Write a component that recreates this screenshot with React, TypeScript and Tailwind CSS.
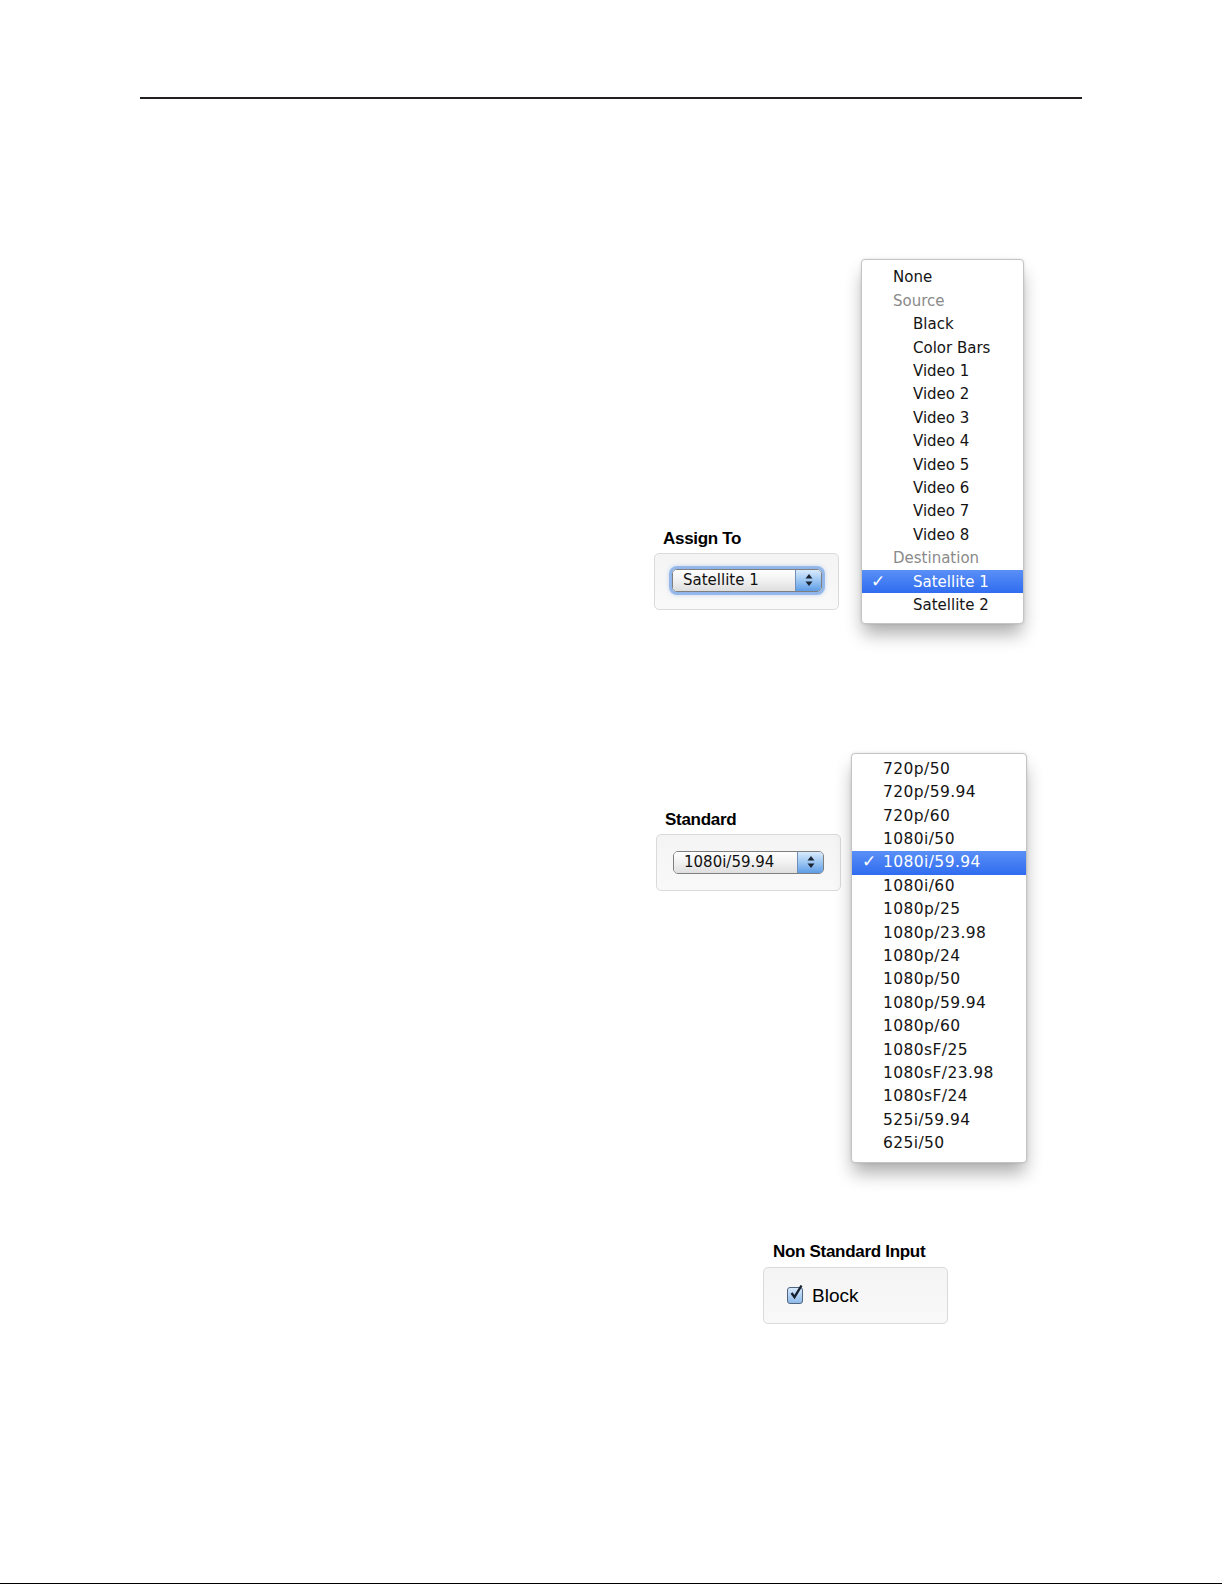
import clsx from "clsx";

type Item = { label: string; kind?: "header" | "sub"; checked?: boolean };

const ASSIGN_ITEMS: Item[] = [
  { label: "None" },
  { label: "Source", kind: "header" },
  { label: "Black", kind: "sub" },
  { label: "Color Bars", kind: "sub" },
  { label: "Video 1", kind: "sub" },
  { label: "Video 2", kind: "sub" },
  { label: "Video 3", kind: "sub" },
  { label: "Video 4", kind: "sub" },
  { label: "Video 5", kind: "sub" },
  { label: "Video 6", kind: "sub" },
  { label: "Video 7", kind: "sub" },
  { label: "Video 8", kind: "sub" },
  { label: "Destination", kind: "header" },
  { label: "Satellite 1", kind: "sub", checked: true },
  { label: "Satellite 2", kind: "sub" },
];

const STANDARDS = [
  "720p/50",
  "720p/59.94",
  "720p/60",
  "1080i/50",
  "1080i/59.94",
  "1080i/60",
  "1080p/25",
  "1080p/23.98",
  "1080p/24",
  "1080p/50",
  "1080p/59.94",
  "1080p/60",
  "1080sF/25",
  "1080sF/23.98",
  "1080sF/24",
  "525i/59.94",
  "625i/50",
];

const UI_FONT = "font-['DejaVu_Sans',sans-serif]";
const LABEL_FONT = "font-['Liberation_Sans',Arial,sans-serif]";

function Arrows() {
  return (
    <svg width="8" height="14" viewBox="0 0 8 14">
      <path d="M4 1 L7.5 5.5 L0.5 5.5 Z" fill="#1b2433" />
      <path d="M4 13 L7.5 8.5 L0.5 8.5 Z" fill="#1b2433" />
    </svg>
  );
}

function Select({ value, focused, width }: { value: string; focused?: boolean; width: string }) {
  return (
    <div
      className={clsx(
        "flex h-[23px] overflow-hidden rounded-[5px] border border-[#7f7f7f]",
        width,
        focused && "shadow-[0_0_0_3px_rgba(96,152,228,0.55),0_0_4px_3px_rgba(96,152,228,0.35)]"
      )}
    >
      <div
        className={clsx(
          "flex flex-1 items-center bg-linear-to-b from-white via-[#f1f1f1] to-[#dedede] pl-[10px] text-[15px] text-[#111]",
          UI_FONT
        )}
      >
        {value}
      </div>
      <div className="flex w-[26px] items-center justify-center border-l border-[#6f8fb8] bg-linear-to-b from-[#d8eafc] via-[#9cc6f2] to-[#5d9ce6]">
        <Arrows />
      </div>
    </div>
  );
}

function GroupBox({ children, className }: { children: React.ReactNode; className?: string }) {
  return (
    <div
      className={clsx(
        "h-[57px] w-[185px] rounded-[5px] border border-[#dadada] bg-linear-to-b from-[#f4f4f4] to-[#f9f9f9]",
        className
      )}
    >
      {children}
    </div>
  );
}

function Label({ text, className }: { text: string; className?: string }) {
  return (
    <div
      className={clsx(
        "h-[20px] text-[17px] leading-[20px] font-bold tracking-[-0.3px] text-black",
        LABEL_FONT,
        className
      )}
    >
      {text}
    </div>
  );
}

function Check() {
  return <span className="text-[17px] leading-none font-bold text-white">✓</span>;
}

function itemColor(it: Item) {
  if (it.checked) return "bg-linear-to-b from-[#5a8ff6] to-[#2f6cf0] text-white";
  if (it.kind === "header") return "text-[#8a8a8a]";
  return "text-[#141414]";
}

function AssignMenu() {
  return (
    <div
      className={clsx(
        "w-[163px] rounded-[4px] border border-[#c4c4c4] bg-white pt-[6px] pb-[6px] shadow-[0_12px_18px_-2px_rgba(0,0,0,0.32),0_0_3px_rgba(0,0,0,0.12)]",
        UI_FONT
      )}
    >
      {ASSIGN_ITEMS.map((it) => (
        <div
          key={it.label}
          className={clsx(
            "relative flex h-[23.4px] items-center text-[15px]",
            itemColor(it),
            it.kind === "sub" ? "pl-[51px]" : "pl-[31px]"
          )}
        >
          {it.checked && (
            <span className="absolute left-[9px]">
              <Check />
            </span>
          )}
          {it.label}
        </div>
      ))}
    </div>
  );
}

function StandardMenu() {
  return (
    <div
      className={clsx(
        "w-[176px] rounded-[4px] border border-[#c4c4c4] bg-white pt-[4px] pb-[6px] shadow-[0_12px_18px_-2px_rgba(0,0,0,0.32),0_0_3px_rgba(0,0,0,0.12)]",
        UI_FONT
      )}
    >
      {STANDARDS.map((s) => {
        const on = s === "1080i/59.94";
        return (
          <div
            key={s}
            className={clsx(
              "relative flex h-[23.4px] items-center pl-[31px] text-[15.5px] tracking-[0.4px]",
              on ? "bg-linear-to-b from-[#5a8ff6] to-[#2f6cf0] text-white" : "text-[#141414]"
            )}
          >
            {on && (
              <span className="absolute left-[10px]">
                <Check />
              </span>
            )}
            {s}
          </div>
        );
      })}
    </div>
  );
}

export default function App() {
  return (
    <div className="flex h-[1585px] w-[1225px] flex-col bg-white">
      {/* page rule */}
      <div className="mt-[97px] ml-[140px] h-[2px] w-[942px] bg-[#231f20]" />

      {/* Assign To */}
      <div className="mt-[160px] ml-[654px] flex items-end gap-[22px]">
        <div className="mb-[14px]">
          <Label text="Assign To" className="mb-[4px] ml-[9px]" />
          <GroupBox className="pt-[15px] pl-[17px]">
            <Select value="Satellite 1" focused width="w-[150px]" />
          </GroupBox>
        </div>
        <AssignMenu />
      </div>

      {/* Standard */}
      <div className="mt-[129px] ml-[656px] flex items-start gap-[10px]">
        <div className="mt-[57px]">
          <Label text="Standard" className="mb-[4px] ml-[9px]" />
          <GroupBox className="pt-[16px] pl-[16px]">
            <Select value="1080i/59.94" width="w-[151px]" />
          </GroupBox>
        </div>
        <StandardMenu />
      </div>

      {/* Non Standard Input */}
      <div className="mt-[79px] ml-[763px]">
        <Label text="Non Standard Input" className="mb-[5px] ml-[10px] tracking-[-0.1px]" />
        <GroupBox className="flex items-start pt-[18px] pl-[23px]">
          <div className="flex items-center gap-[9px]">
            <div className="relative h-[17px] w-[16px] rounded-[3px] border border-[#4f6580] bg-linear-to-b from-[#d6e8fb] to-[#8fb9e8]">
              <svg
                width="15"
                height="16"
                viewBox="0 0 15 16"
                className="absolute top-[-4px] left-[1px]"
              >
                <path d="M2.5 9 L5.5 13 L12.5 1.5" fill="none" stroke="#16202e" strokeWidth="2.4" />
              </svg>
            </div>
            <span className={clsx("text-[19px] leading-[20px] text-black", LABEL_FONT)}>Block</span>
          </div>
        </GroupBox>
      </div>

      <div className="flex-1" />
      <div className="mb-[1px] h-[1px] w-[1222px] bg-black" />
    </div>
  );
}
